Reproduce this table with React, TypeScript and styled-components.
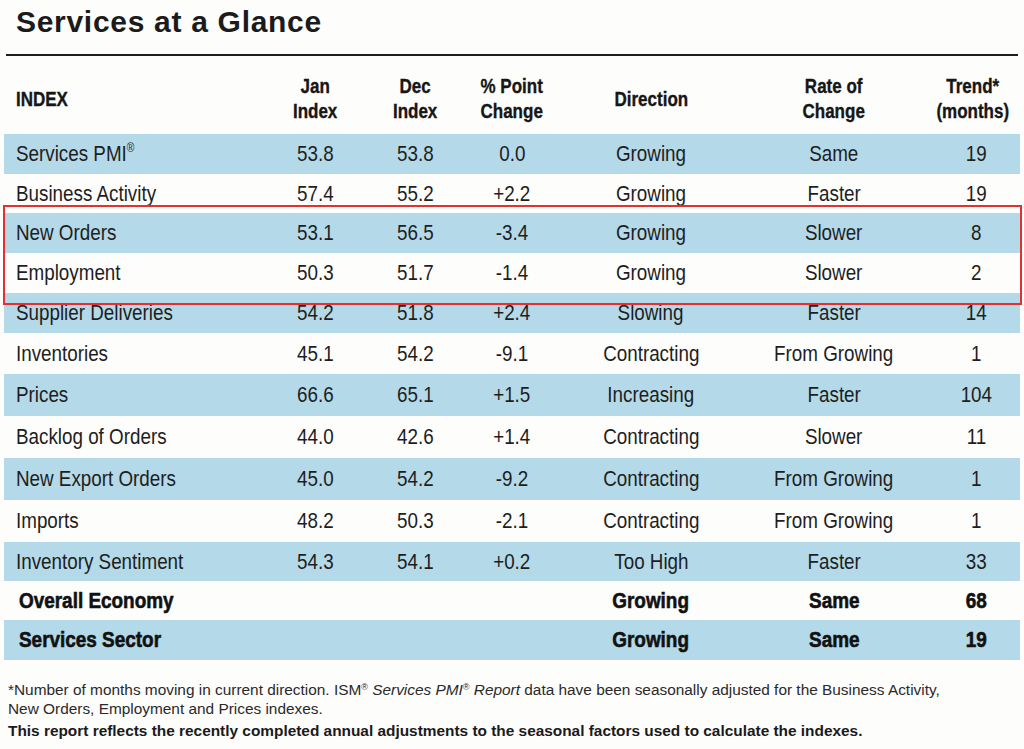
import React from "react";
import styled, { createGlobalStyle } from "styled-components";

const Global = createGlobalStyle`
  html, body { margin: 0; padding: 0; background: #fdfdfc; }
  body { font-family: "Liberation Sans", Arial, sans-serif; color: #1e1e1e; }
`;

const Page = styled.div`
  width: 1024px;
  height: 749px;
  overflow: hidden;
  display: flex;
  flex-direction: column;
`;

const TitleBar = styled.header`
  height: 54px;
  margin: 0 6px;
  border-bottom: 2px solid #1e1e1e;
  display: flex;
  align-items: center;
`;

const Title = styled.h1`
  margin: 0 0 10px 10px;
  font-family: "Liberation Sans", Arial, sans-serif;
  font-weight: 700;
  font-size: 30px;
  letter-spacing: 0.7px;
  color: #1b1b1b;
`;

const TableWrap = styled.div`
  position: relative;
  margin: 1px 4px 0 4px;
`;

const Grid = styled.div`
  display: grid;
  grid-template-columns: 261px 100px 100px 94px 184px 182px 95px;
`;

/* condensed text: Liberation Sans narrowed horizontally, like Helvetica Condensed */
const Narrow = styled.span<{ $left?: boolean; $scale: number }>`
  display: inline-block;
  transform: scaleX(${(p) => p.$scale});
  transform-origin: ${(p) => (p.$left ? "left center" : "center center")};
  white-space: nowrap;
`;

const HeadCell = styled.div<{ $left?: boolean }>`
  height: 77px;
  padding-top: 7px;
  box-sizing: border-box;
  display: flex;
  align-items: center;
  justify-content: ${(p) => (p.$left ? "flex-start" : "center")};
  padding-left: ${(p) => (p.$left ? "12px" : "0")};
  text-align: center;
  font-family: "Liberation Sans", Arial, sans-serif;
  font-weight: 700;
  font-size: 20px;
  line-height: 25px;
  color: #161616;
  -webkit-text-stroke: 0.35px #161616;
`;

const Cell = styled.div<{ $blue: boolean; $h: number; $left?: boolean; $bold?: boolean; $shift?: number }>`
  height: ${(p) => p.$h}px;
  background: ${(p) => (p.$blue ? "#b4d9e8" : "transparent")};
  display: flex;
  align-items: center;
  justify-content: ${(p) => (p.$left ? "flex-start" : "center")};
  padding-left: ${(p) => (p.$left ? (p.$bold ? 15 : 12) : p.$shift || 0)}px;
  font-family: "Liberation Sans", Arial, sans-serif;
  font-size: 22px;
  font-weight: ${(p) => (p.$bold ? 700 : 400)};
  color: ${(p) => (p.$bold ? "#111" : "#1e1e1e")};
  -webkit-text-stroke: ${(p) => (p.$bold ? "0.6px #111" : "0")};
  white-space: nowrap;
`;

const Sup = styled.sup`
  font-size: 12px;
  line-height: 0;
  vertical-align: 9px;
`;

const Highlight = styled.div`
  position: absolute;
  left: -1px;
  right: -2px;
  top: 148px;
  height: 100px;
  box-sizing: border-box;
  border: 2px solid #e5302f;
  pointer-events: none;
`;

const Notes = styled.div`
  margin: 20px 0 0 8px;
  font-family: "Liberation Sans", Arial, sans-serif;
  font-size: 15.4px;
  color: #2a2a2a;
`;

const Note = styled.p<{ $bold?: boolean }>`
  margin: 0 0 3px 0;
  line-height: 19px;
  font-weight: ${(p) => (p.$bold ? 700 : 400)};
  color: ${(p) => (p.$bold ? "#1a1a1a" : "#2a2a2a")};
`;

const NoteSup = styled.sup`
  font-size: 9px;
  line-height: 0;
  vertical-align: 5px;
`;

type Row = {
  name: React.ReactNode;
  jan?: string;
  dec?: string;
  chg?: string;
  dir: string;
  rate: string;
  trend: string;
  h: number;
  bold?: boolean;
};

const rows: Row[] = [
  { name: <>Services PMI<Sup>®</Sup></>, jan: "53.8", dec: "53.8", chg: "0.0", dir: "Growing", rate: "Same", trend: "19", h: 40 },
  { name: "Business Activity", jan: "57.4", dec: "55.2", chg: "+2.2", dir: "Growing", rate: "Faster", trend: "19", h: 39 },
  { name: "New Orders", jan: "53.1", dec: "56.5", chg: "-3.4", dir: "Growing", rate: "Slower", trend: "8", h: 40 },
  { name: "Employment", jan: "50.3", dec: "51.7", chg: "-1.4", dir: "Growing", rate: "Slower", trend: "2", h: 40 },
  { name: "Supplier Deliveries", jan: "54.2", dec: "51.8", chg: "+2.4", dir: "Slowing", rate: "Faster", trend: "14", h: 40 },
  { name: "Inventories", jan: "45.1", dec: "54.2", chg: "-9.1", dir: "Contracting", rate: "From Growing", trend: "1", h: 41 },
  { name: "Prices", jan: "66.6", dec: "65.1", chg: "+1.5", dir: "Increasing", rate: "Faster", trend: "104", h: 42 },
  { name: "Backlog of Orders", jan: "44.0", dec: "42.6", chg: "+1.4", dir: "Contracting", rate: "Slower", trend: "11", h: 42 },
  { name: "New Export Orders", jan: "45.0", dec: "54.2", chg: "-9.2", dir: "Contracting", rate: "From Growing", trend: "1", h: 42 },
  { name: "Imports", jan: "48.2", dec: "50.3", chg: "-2.1", dir: "Contracting", rate: "From Growing", trend: "1", h: 42 },
  { name: "Inventory Sentiment", jan: "54.3", dec: "54.1", chg: "+0.2", dir: "Too High", rate: "Faster", trend: "33", h: 39 },
  { name: "Overall Economy", dir: "Growing", rate: "Same", trend: "68", h: 39, bold: true },
  { name: "Services Sector", dir: "Growing", rate: "Same", trend: "19", h: 40, bold: true },
];

const heads: { label: React.ReactNode; left?: boolean }[] = [
  { label: "INDEX", left: true },
  { label: <>Jan<br />Index</> },
  { label: <>Dec<br />Index</> },
  { label: <>% Point<br />Change</> },
  { label: "Direction" },
  { label: <>Rate of<br />Change</> },
  { label: <>Trend*<br />(months)</> },
];

export default function App() {
  return (
    <Page>
      <Global />
      <TitleBar>
        <Title>Services at a Glance</Title>
      </TitleBar>
      <TableWrap>
        <Grid>
          {heads.map((h, i) => (
            <HeadCell key={i} $left={h.left}>
              <Narrow $left={h.left} $scale={0.85}>{h.label}</Narrow>
            </HeadCell>
          ))}
          {rows.map((r, i) => {
            const blue = i % 2 === 0;
            const c = { $blue: blue, $h: r.h, $bold: r.bold };
            const s = r.bold ? 0.86 : 0.855;
            const vals = [r.jan, r.dec, r.chg, r.dir, r.rate];
            return (
              <React.Fragment key={i}>
                <Cell {...c} $left>
                  <Narrow $left $scale={s}>{r.name}</Narrow>
                </Cell>
                {vals.map((v, j) => (
                  <Cell key={j} {...c}>
                    {v ? <Narrow $scale={s}>{v}</Narrow> : null}
                  </Cell>
                ))}
                <Cell {...c} $shift={7}>
                  <Narrow $scale={s}>{r.trend}</Narrow>
                </Cell>
              </React.Fragment>
            );
          })}
        </Grid>
        <Highlight />
      </TableWrap>
      <Notes>
        <Note>
          *Number of months moving in current direction. ISM<NoteSup>®</NoteSup> <i>Services PMI<NoteSup>®</NoteSup> Report</i> data have been seasonally adjusted for the Business Activity,
          <br />
          New Orders, Employment and Prices indexes.
        </Note>
        <Note $bold>This report reflects the recently completed annual adjustments to the seasonal factors used to calculate the indexes.</Note>
      </Notes>
    </Page>
  );
}
